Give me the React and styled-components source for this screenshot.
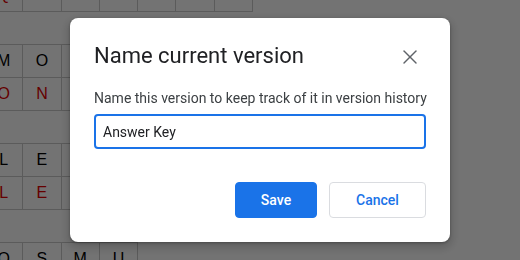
import React from 'react'
import styled, { createGlobalStyle } from 'styled-components'
import { X } from 'lucide-react'

const GlobalStyle = createGlobalStyle`
  html, body {
    margin: 0;
    padding: 0;
    background: #ffffff;
    overflow: hidden;
  }
  * { box-sizing: border-box; }
`

const Page = styled.div`
  width: 520px;
  height: 260px;
  overflow: hidden;
  background: #fff;
`

const Board = styled.div`
  margin-top: -22px;
  margin-left: -16px;
  display: flex;
  flex-direction: column;
  align-items: flex-start;
`

const Block = styled.div`
  display: grid;
  grid-template-columns: repeat(${({ cols }) => cols}, 38.3px);
  border-top: 1px solid #c9c9c9;
  border-left: 1px solid #c9c9c9;
`

const Cell = styled.div`
  height: 33px;
  border-right: 1px solid #c9c9c9;
  border-bottom: 1px solid #c9c9c9;
  display: flex;
  align-items: center;
  justify-content: center;
  font-family: "Liberation Sans", Arial, sans-serif;
  font-size: 16px;
  color: ${({ $red }) => ($red ? '#e00000' : '#000')};
`

const Gap = styled.div`
  height: 32px;
`

const Overlay = styled.div`
  position: fixed;
  inset: 0;
  background: rgba(0, 0, 0, 0.55);
  display: flex;
  align-items: center;
  justify-content: center;
`

const Dialog = styled.div`
  width: 380px;
  background: #fff;
  border-radius: 8px;
  padding: 24px 24px 24px;
  box-shadow: 0 4px 8px 3px rgba(0, 0, 0, 0.15), 0 1px 3px rgba(0, 0, 0, 0.3);
  font-family: Roboto, "Liberation Sans", Arial, sans-serif;
`

const Header = styled.div`
  display: flex;
  align-items: center;
  justify-content: space-between;
`

const Title = styled.h2`
  margin: 0;
  font-size: 22px;
  line-height: 28px;
  font-weight: 400;
  color: #202124;
`

const CloseButton = styled.button`
  width: 24px;
  height: 24px;
  margin: 2px 4px 0 0;
  padding: 0;
  border: none;
  background: transparent;
  color: #5f6368;
  display: flex;
  align-items: center;
  justify-content: center;
  cursor: pointer;
`

const Hint = styled.p`
  margin: 18px 0 6px;
  font-size: 14px;
  line-height: 20px;
  white-space: nowrap;
  color: #3c4043;
`

const Input = styled.input`
  width: 100%;
  height: 35px;
  border: 2px solid #1a73e8;
  border-radius: 4px;
  padding: 0 7px;
  font-family: Roboto, "Liberation Sans", Arial, sans-serif;
  font-size: 14px;
  color: #202124;
  outline: none;
`

const Actions = styled.div`
  display: flex;
  justify-content: flex-end;
  gap: 12px;
  margin-top: 33px;
`

const Button = styled.button`
  height: 36px;
  width: ${({ $w }) => $w}px;
  border-radius: 4px;
  font-family: Roboto, "Liberation Sans", Arial, sans-serif;
  font-size: 14px;
  font-weight: 500;
  cursor: pointer;
  border: 1px solid ${({ $primary }) => ($primary ? '#1a73e8' : '#dadce0')};
  background: ${({ $primary }) => ($primary ? '#1a73e8' : '#fff')};
  color: ${({ $primary }) => ($primary ? '#fff' : '#1a73e8')};
`

const blocks = [
  [{ red: true, letters: 'QRTANEE' }],
  [{ letters: 'MOV' }, { red: true, letters: 'ONV' }],
  [{ letters: 'LEA' }, { red: true, letters: 'LEA' }],
  [{ letters: 'OSMU' }, { red: true, letters: 'OSMU' }],
]

const App = () => {
  return (
    <>
      <GlobalStyle />
      <Page>
        <Board>
          {blocks.map((rows, i) => (
            <React.Fragment key={i}>
              {i > 0 && <Gap />}
              <Block cols={rows[0].letters.length}>
                {rows.map((r, j) =>
                  r.letters.split('').map((ch, k) => (
                    <Cell key={j + '-' + k} $red={r.red}>{ch}</Cell>
                  ))
                )}
              </Block>
            </React.Fragment>
          ))}
        </Board>
      </Page>
      <Overlay>
        <Dialog>
          <Header>
            <Title>Name current version</Title>
            <CloseButton aria-label="Close">
              <X size={24} strokeWidth={1.4} />
            </CloseButton>
          </Header>
          <Hint>Name this version to keep track of it in version history</Hint>
          <Input defaultValue="Answer Key" />
          <Actions>
            <Button $primary $w={82}>Save</Button>
            <Button $w={97}>Cancel</Button>
          </Actions>
        </Dialog>
      </Overlay>
    </>
  )
}

export default App
